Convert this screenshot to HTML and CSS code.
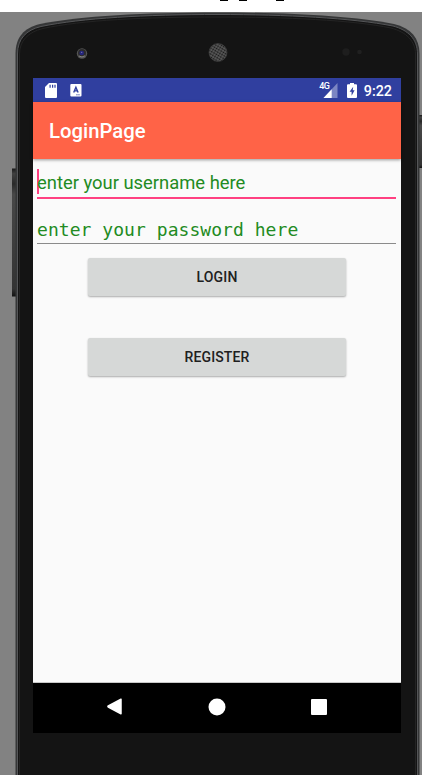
FILE: index.html
```html
<!DOCTYPE html>
<html lang="en">
<head>
<meta charset="utf-8">
<title>LoginPage</title>
<link rel="stylesheet" href="styles.css">
</head>
<body>
<main class="stage">
  <svg class="device" viewBox="0 0 422 775" aria-hidden="true">
    <defs>
      <linearGradient id="key" x1="0" x2="0" y1="0" y2="1">
        <stop offset="0" stop-color="#181818"/><stop offset=".04" stop-color="#414141"/><stop offset=".12" stop-color="#292929"/><stop offset=".2" stop-color="#484848"/><stop offset=".94" stop-color="#333"/><stop offset="1" stop-color="#111"/>
      </linearGradient>
      <pattern id="mesh" width="2.600" height="2.600" patternUnits="userSpaceOnUse" patternTransform="rotate(30)">
        <rect width="2.600" height="2.600" fill="#5c5c5c"/><circle cx="1.300" cy="1.300" r=".95" fill="#161616"/>
      </pattern>
    </defs>
    <rect width="422" height="12" fill="#fff"/>
    <path d="M220 0h8v1h-8zM239 0h8v1h-8zM276 0h8v1h-8z" fill="#000"/>
    <rect x="12" y="168.500" width="4" height="128" fill="url(#key)"/>
    <rect x="418.500" y="115" width="4" height="53" fill="url(#key)"/>
    <path d="M15.500 776V54C15.500 37 24 28 40 24C80 16 145 12.500 218 12.500C286 12.500 352 16 394 24C411 28 419.500 38 419.500 54V776Z" fill="#353637"/>
    <path d="M17.500 776V54C17.500 39 26 30 41 26.500C82 18 145 14.500 218 14.500C286 14.500 352 18 393 26C408 30 417.500 39 417.500 54V776Z" fill="#141414" stroke="#555658" stroke-width="1"/>
    <path d="M19.500 776V54C19.500 41 28 32 43 28.500C82 20 145 17 218 17C286 17 352 20 391 28C406 32 415.500 41 415.500 54V776Z" fill="#141414" stroke="#242424" stroke-width="1"/>
    <circle cx="82" cy="53.500" r="5.200" fill="#555"/><circle cx="82" cy="53" r="4" fill="#2c2c2c"/><circle cx="81.700" cy="53" r="2.300" fill="#25257c"/><circle cx="81.700" cy="52.300" r=".6" fill="#8585b5"/><path d="M79 56q3 2 6-.2" fill="none" stroke="#858585"/>
    <circle cx="218" cy="52.500" r="9" fill="url(#mesh)" stroke="#444" stroke-width=".6"/>
    <circle cx="346" cy="52" r="3.700" fill="#1e1e1e"/><circle cx="359.500" cy="52" r="2.300" fill="#202020"/>
  </svg>
  <section class="screen">
    <div class="status">
      <svg class="sd" width="12" height="15" viewBox="0 0 12 15"><path d="M4 0h7q1 0 1 1v13q0 1-1 1H1q-1 0-1-1V4z" fill="#fff"/><path d="M4.500 1.800h1.200v3H4.500zM7 1.800h1.200v3H7zM9.400 1.800h1.200v3H9.400z" fill="#303f9f"/></svg>
      <svg class="kb" width="12" height="13" viewBox="0 0 12 13"><rect x=".3" width="11.200" height="12.500" rx="1" fill="#fff"/><path d="M3.700 8.600L5.900 3.300L8.100 8.600M4.300 6.900H7.500" stroke="#303f9f" stroke-width="1.400" fill="none"/><path d="M6.200 10.800h4" stroke="#303f9f" stroke-width=".8" stroke-dasharray="1.500 .5"/></svg>
      <div class="signal">
        <span class="net">4G</span>
        <svg width="15" height="15" viewBox="0 0 15 15"><path d="M14.500 0V15H.5z" fill="#7c86c3"/><path d="M8.700 6.200V15H.5z" fill="#fff"/></svg>
      </div>
      <svg class="battery" width="10" height="15" viewBox="0 0 10 15"><path d="M3 0h4v1.300h2q1 0 1 1V14q0 1-1 1H1q-1 0-1-1V2.300q0-1 1-1h2z" fill="#fff"/><path d="M6.200 3.800L2.600 8.700H4.600V12.800L7.600 7.300H5.700z" fill="#303f9f"/></svg>
      <span class="clock">9:22</span>
    </div>
    <header class="appbar">LoginPage</header>
    <form class="form">
      <div class="field username"><span>enter your username here</span></div>
      <div class="field password"><span>enter your password here</span></div>
      <button type="button" class="login">LOGIN</button>
      <button type="button" class="register">REGISTER</button>
    </form>
    <nav class="nav">
      <svg width="16" height="18" viewBox="0 0 16 18"><path d="M14 1.200V15.800L1.300 9Q.5 8.500 1.300 8z" fill="#fff" stroke="#fff" stroke-width="1.500" stroke-linejoin="round"/></svg>
      <svg width="18" height="18" viewBox="0 0 18 18"><circle cx="9" cy="9" r="8.500" fill="#fff"/></svg>
      <svg width="16" height="16" viewBox="0 0 16 16"><rect width="16" height="16" rx="1" fill="#fff"/></svg>
    </nav>
  </section>
</main>
</body>
</html>
```
FILE: styles.css
```css
* { box-sizing: border-box; }
body { margin: 0; background: #828282; font-family: Roboto, sans-serif; }
.stage { position: relative; width: 422px; height: 775px; padding: 78px 21px 42px 33px; overflow: hidden; }
.device { position: absolute; left: 0; top: 0; width: 422px; height: 775px; }
.screen { position: relative; display: flex; flex-direction: column; height: 655px; background: #fafafa; }
.status { display: flex; align-items: center; height: 24px; padding: 0 9px 0 12px; background: #303f9f; color: #fff; }
.kb { margin-left: 13px; }
.signal { display: flex; align-items: center; margin-left: auto; }
.net { width: 3.500px; font-size: 9px; font-weight: 500; line-height: 9px; margin-top: -7px; white-space: nowrap; letter-spacing: -.6px; z-index: 1; }
.battery { margin-left: 9px; }
.clock { margin-left: 7px; font-size: 14.300px; font-weight: 500; line-height: 22px; padding-top: 2px; }
.appbar { height: 57px; padding-left: 16px; background: #ff6347; color: #fff; font-size: 20.300px; font-weight: 500; line-height: 59px; box-shadow: 0 1px 3px rgba(0,0,0,.4); }
.form { display: flex; flex-direction: column; flex: 1; padding: 0 5px 0 4px; border-bottom: 1px solid #c8c8c8; }
.field { color: #228b22; white-space: nowrap; }
.username { height: 40px; padding-top: 10px; border-bottom: 2px solid #ff4081; font-size: 18.400px; line-height: 28px; }
.username span { display: block; height: 25px; border-left: 2px solid #ff4081; text-indent: -2px; }
.password { height: 45px; padding-top: 18px; border-bottom: 1px solid #8b8b8b; font-family: "DejaVu Sans Mono", monospace; font-size: 18px; line-height: 26px; letter-spacing: .05px; }
button { width: 258px; height: 37.500px; margin: 0 0 0 51px; padding: 0; border: 0; border-radius: 2px; background: #d6d8d7; color: #202020; box-shadow: 0 1px 2px rgba(0,0,0,.32); font: 500 14px/38px Roboto, sans-serif; letter-spacing: .15px; }
.login { margin-top: 14px; }
.register { margin-top: 42.500px; }
.nav { display: flex; align-items: center; justify-content: space-between; height: 50px; padding: 0 74px 2px; background: #000; }
```
